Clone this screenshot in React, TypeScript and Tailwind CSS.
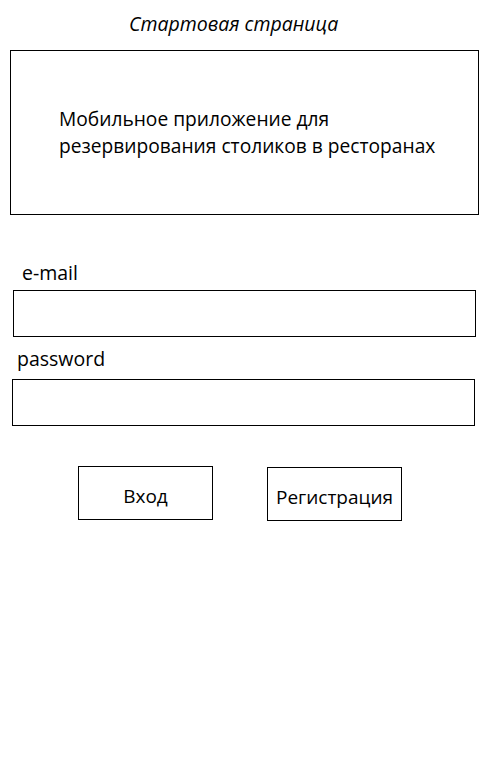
import React from "react";

export default function App() {
  const font = { fontFamily: '"Open Sans", "Noto Sans", sans-serif' };
  return (
    <div className="w-[497px] h-[770px] bg-white text-black" style={font}>
      <div className="pt-[12px] pl-[129px] text-[19.5px] leading-[24px] italic">Стартовая страница</div>
      <div className="mt-[14px] ml-[10px] w-[469px] h-[165px] border border-black pt-[54px] pl-[48px] text-[19.2px] leading-[27px]">
        <div>Мобильное приложение для</div>
        <div>резервирования столиков в ресторанах</div>
      </div>
      <div className="mt-[44px] pl-[22px] text-[19.5px] leading-[27px]">e-mail</div>
      <div className="mt-[4px] ml-[13px] w-[463px] h-[47px] border border-black" />
      <div className="mt-[8px] pl-[17px] text-[19.5px] leading-[27px]">password</div>
      <div className="mt-[7px] ml-[12px] w-[463px] h-[47px] border border-black" />
      <div className="mt-[40px] flex items-start">
        <div className="ml-[78px] w-[135px] h-[54px] pt-[6px] border border-black flex items-center justify-center text-[19px]">Вход</div>
        <div className="ml-[54px] mt-[1px] w-[135px] h-[54px] pt-[6px] border border-black flex items-center justify-center text-[19px]">Регистрация</div>
      </div>
    </div>
  );
}
